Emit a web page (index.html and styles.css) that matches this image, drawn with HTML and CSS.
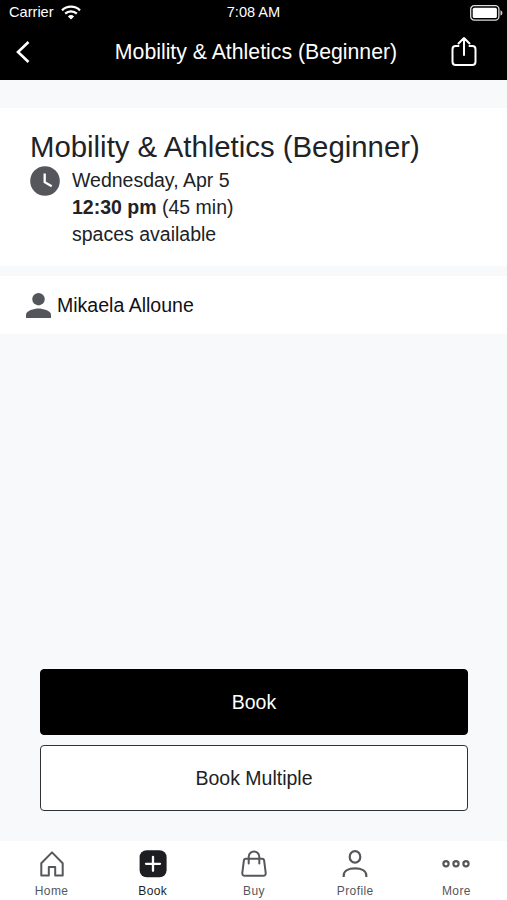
FILE: index.html
```html
<!DOCTYPE html>
<html lang="en">
<head>
<meta charset="utf-8">
<meta name="viewport" content="width=device-width, initial-scale=1">
<title>Mobility &amp; Athletics (Beginner)</title>
<link rel="stylesheet" href="styles.css">
</head>
<body>
<div class="app">
  <header class="header">
    <div class="status">
      <div class="carrier"><span>Carrier</span>
        <svg width="20" height="15" viewBox="0 0 20 15" fill="none" stroke="#fff" stroke-width="2.3"><path d="M1 5.3a13 13 0 0 1 18 0M4.2 8.6a8.4 8.4 0 0 1 11.6 0"/><path d="M6.9 11.4a4.5 4.5 0 0 1 6.2 0L10 14.6z" fill="#fff" stroke="none"/></svg>
      </div>
      <span class="time">7:08 AM</span>
      <svg class="battery" width="33" height="16" viewBox="0 0 33 16"><rect x=".7" y=".7" width="28.2" height="14.4" rx="3.6" fill="none" stroke="#ddd" stroke-width="1.3"/><rect x="2.7" y="2.7" width="24.2" height="10.4" rx="1.6" fill="#fff"/><path d="M30.5 5.2q2 .7 2 2.7t-2 2.7z" fill="#ccc"/></svg>
    </div>
    <div class="navbar">
      <svg class="back" width="15" height="24" viewBox="0 0 15 24" fill="none" stroke="#fff" stroke-width="2.6"><path d="M13.500 2 3 12l10.500 10"/></svg>
      <h1 class="nav-title">Mobility &amp; Athletics (Beginner)</h1>
      <svg class="share" width="26" height="31" viewBox="0 0 26 31" fill="none" stroke="#fff" stroke-width="2" stroke-linecap="round" stroke-linejoin="round"><path d="M7.5 10H4.7Q1.5 10 1.5 13.2v12.6Q1.5 29 4.7 29h16.6q3.2 0 3.2-3.2V13.2Q24.5 10 21.3 10h-2.8M13 19V2M7.5 7.5 13 2l5.5 5.5"/></svg>
    </div>
  </header>
  <main class="content">
    <section class="class-info">
      <h2 class="class-title">Mobility &amp; Athletics (Beginner)</h2>
      <div class="schedule">
        <svg width="30" height="30" viewBox="0 0 30 30"><circle cx="15" cy="15" r="14.8" fill="#54565c"/><path d="M14.7 7.5v8.7l7 4" fill="none" stroke="#fff" stroke-width="2.3"/></svg>
        <div class="details">
          <div>Wednesday, Apr 5</div>
          <div><b>12:30 pm</b> (45 min)</div>
          <div>spaces available</div>
        </div>
      </div>
    </section>
    <section class="instructor">
      <svg width="25" height="25" viewBox="0 0 25 25" fill="#54565c"><circle cx="12.5" cy="6.2" r="6.2"/><path d="M0 25v-3.300c0-4.100 8.300-6.200 12.500-6.200S25 17.600 25 21.700V25z"/></svg>
      <span>Mikaela Alloune</span>
    </section>
    <div class="actions">
      <button class="btn primary">Book</button>
      <button class="btn">Book Multiple</button>
    </div>
  </main>
  <nav class="tabs">
    <a class="tab">
      <svg width="28" height="28" viewBox="0 0 28 28" fill="none" stroke="#55575b" stroke-width="2" stroke-linejoin="round"><path d="M3.300 13.200 14 2.400l10.700 10.800v12.300h-7.500v-8.600h-6.400v8.600H3.300z"/></svg>
      <span>Home</span></a>
    <a class="tab active">
      <svg width="28" height="28" viewBox="0 0 28 28"><rect x=".6" y=".3" width="27" height="27" rx="7" fill="#1d1e22"/><path d="M14 6.800v14M7 13.800h14" stroke="#fff" stroke-width="2.3" stroke-linecap="round"/></svg>
      <span>Book</span></a>
    <a class="tab">
      <svg width="28" height="28" viewBox="0 0 28 28" fill="none" stroke="#55575b" stroke-width="2" stroke-linecap="round" stroke-linejoin="round"><path d="M5.700 8.800h16.600q1.500 0 1.800 1.500l1.600 12.500q.3 3-2.700 3H5q-3 0-2.700-3l1.600-12.500q.3-1.500 1.800-1.500zM8.700 13.500V6.700a5.300 5.300 0 0 1 10.600 0v6.800"/></svg>
      <span>Buy</span></a>
    <a class="tab">
      <svg width="28" height="28" viewBox="0 0 28 28" fill="none" stroke="#55575b" stroke-width="2.200"><ellipse cx="14" cy="6.900" rx="5.300" ry="5.800"/><path d="M2.700 27v-1.600c0-4.700 5-7 11.300-7s11.300 2.300 11.300 7V27"/></svg>
      <span>Profile</span></a>
    <a class="tab">
      <svg width="28" height="28" viewBox="0 0 28 28" fill="none" stroke="#55575b" stroke-width="2.200"><circle cx="4" cy="13.700" r="2.600"/><circle cx="14" cy="13.700" r="2.600"/><circle cx="24" cy="13.700" r="2.600"/></svg>
      <span>More</span></a>
  </nav>
</div>
</body>
</html>
```
FILE: styles.css
```css
* { box-sizing: border-box; }
body { margin: 0; font-family: "Liberation Sans", Arial, sans-serif; color: #202226; }
h1, h2 { margin: 0; font-weight: 400; }
svg { display: block; flex: none; }
.app { height: 900px; display: flex; flex-direction: column; background: #f8f9fb; }
.header { height: 80px; background: #000; color: #fff; flex: none; }
.status { height: 24px; display: grid; grid-template-columns: 1fr auto 1fr; align-items: center; padding: 0 4px 0 9px; font-size: 14.6px; line-height: 24px; }
.carrier { display: flex; align-items: center; gap: 7px; }
.carrier svg { margin-top: 1px; }
.time { margin-right: 5px; }
.battery { justify-self: end; margin-top: 2px; }
.navbar { height: 56px; display: grid; grid-template-columns: 98px 1fr 98px; align-items: center; text-align: center; }
.back { margin-left: 15px; }
.nav-title { font-size: 21.25px; white-space: nowrap; justify-self: center; margin-left: 5px; }
.share { justify-self: end; margin: 0 30px 1px 0; }
.content { flex: 1; display: flex; flex-direction: column; padding-top: 28px; }
.class-info { height: 158px; background: #fff; padding: 21px 30px 0; flex: none; }
.class-title { font-size: 29.35px; line-height: 36px; white-space: nowrap; }
.schedule { display: flex; gap: 12px; padding-top: 1px; font-size: 19.5px; line-height: 27px; }
.details { padding-top: 1px; }
.instructor { margin-top: 10px; height: 58px; background: #fff; display: flex; align-items: center; gap: 6px; padding-left: 26px; font-size: 19.55px; color: #101114; }
.actions { margin-top: auto; padding: 0 39px 30px 40px; display: grid; gap: 10px; }
.btn { height: 66px; padding: 0; border: 1.5px solid #303235; border-radius: 4px; background: #fff; color: #202226; font: 19.5px "Liberation Sans", Arial, sans-serif; }
.primary { background: #000; border-color: #000; color: #fff; }
.tabs { height: 59px; padding-left: 1px; background: #fff; display: grid; grid-template-columns: repeat(5, 1fr); flex: none; }
.tab { display: flex; flex-direction: column; align-items: center; padding-top: 9px; gap: 6px; font-size: 12px; line-height: 14px; letter-spacing: .4px; color: #55575b; }
.active { color: #1d1e22; }
```
